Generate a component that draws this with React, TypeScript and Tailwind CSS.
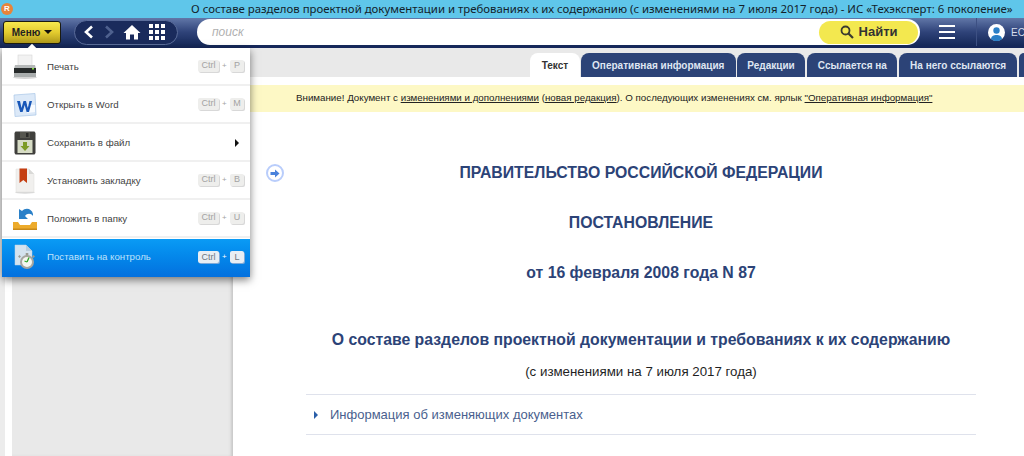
import React from "react";

const Printer = () => (
  <svg width="26" height="26" viewBox="0 0 26 26">
    <ellipse cx="13" cy="23.5" rx="12" ry="1.5" fill="#d5d5d5" />
    <rect x="6" y="1" width="14" height="11" fill="#f2f2f2" stroke="#cfcfcf" strokeWidth="0.5" />
    <path d="M3 11 L23 11 L24 15 L2 15 Z" fill="#b5b8b8" />
    <rect x="2" y="14" width="22" height="5" fill="#262a2a" />
    <rect x="2" y="19" width="22" height="4" fill="#a9adad" />
    <rect x="20" y="14" width="2" height="1.5" fill="#7fdc3c" />
  </svg>
);
const WordIcon = () => (
  <svg width="24" height="24" viewBox="0 0 24 24">
    <path d="M1 2 L22 0.5 L23 22 L2 23.5 Z" fill="#dce9f8" stroke="#a9c5e6" strokeWidth="0.7" />
    <path d="M14 12 L22 12 L22 19 L14 20 Z" fill="#f8fbff" />
    <path d="M4 8 L7 8 L8.5 15 L10.5 8 L13 8 L14.8 15 L16.5 8 L19 8 L16 19 L13.6 19 L11.7 12 L9.6 19 L7.2 19 Z" fill="#1857b8" />
  </svg>
);
const Floppy = () => (
  <svg width="22" height="24" viewBox="0 0 22 24">
    <path d="M1.5 0.5 L20.5 0.5 L21.5 2 L21.5 22 L20.5 23.5 L1.5 23.5 L0.5 22 L0.5 2 Z" fill="#3f3f3c" />
    <rect x="6" y="1" width="10" height="6" fill="#56564f" />
    <rect x="12" y="2" width="2.5" height="4" fill="#2a2a28" />
    <rect x="3.5" y="9" width="15" height="13" fill="#d7dcc5" />
    <path d="M9 11 L13 11 L13 15 L15.5 15 L11 20 L6.5 15 L9 15 Z" fill="#7d9b24" />
  </svg>
);
const Bookmark = () => (
  <svg width="22" height="26" viewBox="0 0 22 26">
    <ellipse cx="11" cy="24.5" rx="10" ry="1.2" fill="#d8d8d8" />
    <path d="M2 1 L15 1 L20 6 L20 24 L2 24 Z" fill="#f1f0ee" stroke="#dddcda" strokeWidth="0.5" />
    <path d="M15 1 L15 6 L20 6 Z" fill="#d9d9d7" />
    <path d="M5.5 0.5 L13 0.5 L13 15 L9.3 12 L5.5 15 Z" fill="#c53f12" />
  </svg>
);
const Folder = () => (
  <svg width="26" height="24" viewBox="0 0 26 24">
    <path d="M1 15 L6 15 L8 18 L18 18 L20 15 L25 15 L25 23 L1 23 Z" fill="#edab2b" />
    <rect x="1" y="21.5" width="24" height="1.5" fill="#c98a1a" />
    <path d="M21 7 C20 2 14 0 10 4 L7 2 L7 12 L16 12 L13 9 C15 6 19 6 21 9 Z" fill="#2a80c8" />
  </svg>
);
const Clock = () => (
  <svg width="26" height="26" viewBox="0 0 26 26">
    <path d="M3 1 L14 1 L20 7 L20 21 L3 21 Z" fill="#d4e3ef" stroke="#bcd2e4" strokeWidth="0.5" />
    <path d="M14 1 L14 7 L20 7 Z" fill="#b6cddf" />
    <circle cx="15" cy="18" r="7" fill="#a6a6a0" />
    <circle cx="15" cy="18" r="5" fill="#f4f6ef" />
    <rect x="13.7" y="9" width="2.6" height="2.4" fill="#9b9b92" />
    <rect x="20.5" y="11.5" width="2" height="2" fill="#9b9b92" transform="rotate(45 21.5 12.5)" />
    <rect x="6.5" y="11.5" width="2" height="2" fill="#9b9b92" transform="rotate(-45 7.5 12.5)" />
    <path d="M15 18 L17 13.5" stroke="#2fa52a" strokeWidth="1.3" />
    <path d="M15 18 L12.5 17" stroke="#2fa52a" strokeWidth="1.1" />
  </svg>
);

const Key = ({ k, wide, active }: { k: string; wide?: boolean; active?: boolean }) => (
  <span
    className={
      "flex h-[12px] items-center justify-center rounded-[2px] text-[9px] leading-none " +
      (wide ? "w-[21px] " : "w-[14px] ") +
      (active
        ? "bg-[#e8eef4] text-[#6d7780] shadow-[1px_1px_0_#7fa9d8]"
        : "bg-[#eeeeec] text-[#a3a3a3] shadow-[1px_1px_0_#d8d8d8]")
    }
  >
    {k}
  </span>
);

const Shortcut = ({ k, active }: { k: string; active?: boolean }) => (
  <div className={"flex items-center gap-[3px] " + (active ? "" : "mb-[3px]")}>
    <Key k="Ctrl" wide active={active} />
    <span className={"w-[5px] text-[8px] " + (active ? "text-white" : "text-[#a3a3a3]")}>+</span>
    <Key k={k} active={active} />
  </div>
);

const MenuRow = ({
  icon,
  label,
  k,
  arrow,
  active,
}: {
  icon: React.ReactNode;
  label: string;
  k?: string;
  arrow?: boolean;
  active?: boolean;
}) => (
  <div
    className={
      "flex h-[38px] items-center pr-[6px] " +
      (active
        ? "mt-[1px] bg-gradient-to-b from-[#0a9bf5] to-[#0470de] pb-[2px]"
        : "border-b-2 border-[#f0f0f0] bg-white pt-[2px]")
    }
  >
    <div className="flex w-[45px] shrink-0 items-center justify-center pl-[1px]">{icon}</div>
    <span className={"flex-1 text-[9.7px] " + (active ? "text-[#bfe3fb]" : "text-[#3f3f3f]")}>{label}</span>
    {k && <Shortcut k={k} active={active} />}
    {arrow && <span className="mr-[5px] h-0 w-0 border-y-[4px] border-l-[4px] border-y-transparent border-l-[#111]" />}
  </div>
);

const Tab = ({ label, active, width }: { label: string; active?: boolean; width: string }) => (
  <div
    className={
      "flex h-[24px] items-center justify-center rounded-t-[8px] text-[10px] font-bold " +
      width +
      (active ? " bg-white text-[#333]" : " bg-[#2c4377] text-[#dfe6f2]")
    }
  >
    {label}
  </div>
);

export default function App() {
  return (
    <div className="relative flex h-[456px] w-[1024px] flex-col overflow-hidden bg-white font-['Liberation_Sans',sans-serif]">
      {/* title bar */}
      <div className="flex h-[18px] shrink-0 items-center bg-[#5fc6ea] pl-[1px]">
        <div className="flex h-[12px] w-[12px] shrink-0 items-center justify-center rounded-full bg-[#e8843a] text-[8px] font-bold text-white">
          R
        </div>
        <span className="ml-[178px] shrink-0 whitespace-nowrap font-['Noto_Sans',sans-serif] text-[11.4px] text-[#13222b]">
          О составе разделов проектной документации и требованиях к их содержанию (с изменениями на 7 июля 2017 года) - ИС «Техэксперт: 6 поколение»
        </span>
      </div>

      {/* toolbar */}
      <div className="flex h-[30px] shrink-0 items-center border-b-2 border-[#16275a] bg-gradient-to-b from-[#6277a8] via-[#2f4379] to-[#152858] pl-[3px]">
        <div className="flex h-[23px] w-[58px] shrink-0 items-center justify-center gap-[4px] rounded-[3px] border border-[#1b1b10] bg-gradient-to-b from-[#f7e94e] via-[#e3cb2e] to-[#b09a1c] text-[10px] font-bold text-[#222]">
          <span>Меню</span>
          <span className="h-0 w-0 border-x-[4px] border-t-[4px] border-x-transparent border-t-[#111]" />
        </div>
        <div className="ml-[13px] flex h-[25px] w-[104px] shrink-0 items-center gap-[8px] rounded-full border border-[#5b6d9b] bg-[#1a2b5c] pl-[8px]">
          <svg width="12" height="14" viewBox="0 0 12 14">
            <path d="M9 1.5 L3 7 L9 12.5" fill="none" stroke="#fff" strokeWidth="2.6" />
          </svg>
          <svg width="12" height="14" viewBox="0 0 12 14">
            <path d="M3 1.5 L9 7 L3 12.5" fill="none" stroke="#4f618f" strokeWidth="2.6" />
          </svg>
          <svg width="18" height="16" viewBox="0 0 18 16">
            <path d="M9 1 L17.5 9 L15 9 L15 15.5 L11 15.5 L11 10.5 L7 10.5 L7 15.5 L3 15.5 L3 9 L0.5 9 Z" fill="#fff" />
          </svg>
          <div className="grid grid-cols-3 gap-[2px]">
            {Array.from({ length: 9 }).map((_, i) => (
              <span key={i} className="h-[4px] w-[4px] bg-white" />
            ))}
          </div>
        </div>
        <div className="ml-[19px] flex h-[26px] w-[723px] shrink-0 items-center rounded-full bg-white pl-[15px] text-[12px] italic text-[#b0b0b0]">
          поиск
          <div className="ml-auto mr-[2px] flex h-[23px] w-[99px] items-center justify-center gap-[5px] rounded-full bg-[#f3e84f] text-[13px] font-bold not-italic text-[#333]">
            <svg width="14" height="14" viewBox="0 0 14 14">
              <circle cx="5.5" cy="5.5" r="4" fill="none" stroke="#3a3a30" strokeWidth="1.8" />
              <path d="M8.5 8.5 L13 13" stroke="#3a3a30" strokeWidth="2.2" />
            </svg>
            Найти
          </div>
        </div>
        <div className="ml-[19px] flex w-[16px] shrink-0 flex-col gap-[4px]">
          <span className="h-[2px] bg-white" />
          <span className="h-[2px] bg-white" />
          <span className="h-[2px] bg-white" />
        </div>
        <div className="ml-[21px] h-full w-px shrink-0 bg-[#3d5083]" />
        <div className="ml-[11px] flex shrink-0 items-center gap-[6px]">
          <svg width="17" height="17" viewBox="0 0 17 17" className="shrink-0">
            <circle cx="8.5" cy="8.5" r="8.5" fill="#fff" />
            <circle cx="8.5" cy="6.5" r="3.2" fill="#2b80c7" />
            <path d="M3 15 C3 9.5 14 9.5 14 15 A8 8 0 0 1 3 15 Z" fill="#2b80c7" />
          </svg>
          <span className="text-[10px] text-[#d7deec]">ЕС</span>
        </div>
      </div>

      {/* body */}
      <div className="flex min-h-0 flex-1">
        {/* sidebar */}
        <div className="flex w-[233px] shrink-0">
          <div className="w-[5px] bg-[#ececec]" />
          <div className="w-[7px] bg-white" />
          <div className="flex-1 bg-[#e9e9e9] shadow-[inset_-3px_0_3px_-1px_#c8c8c8]" />
        </div>

        {/* main */}
        <div className="flex min-w-0 flex-1 flex-col">
          <div className="flex h-[29px] shrink-0 items-end bg-[#e9e9e9] pl-[297px]">
            <Tab label="Текст" active width="w-[50px]" />
            <div className="w-[1px]" />
            <Tab label="Оперативная информация" width="w-[155px]" />
            <div className="w-[1px]" />
            <Tab label="Редакции" width="w-[69px]" />
            <div className="w-[2px]" />
            <Tab label="Ссылается на" width="w-[90px]" />
            <div className="w-[2px]" />
            <Tab label="На него ссылаются" width="w-[118px]" />
            <div className="w-[2px]" />
            <div className="h-[24px] w-[5px] rounded-tl-[8px] bg-[#2c4377]" />
          </div>
          <div className="h-[8px] shrink-0" />
          <div className="flex h-[27px] shrink-0 items-center bg-[#fdf8c5] pl-[63px] text-[9.75px] text-[#222]">
            <span className="whitespace-nowrap">
              Внимание! Документ с <span className="underline">изменениями и дополнениями</span> (
              <span className="underline">новая редакция</span>). О последующих изменениях см. ярлык{" "}
              <span className="underline">"Оперативная информация"</span>
            </span>
          </div>

          <div className="relative flex flex-col items-center pl-[73px] pr-[48px] text-[#2c4377]">
            <div className="absolute left-[33px] top-[52px] flex h-[18px] w-[18px] items-center justify-center rounded-full border-2 border-[#b9cdfb] bg-white">
              <svg width="10" height="9" viewBox="0 0 10 9">
                <path d="M0.5 3 L5 3 L5 0.5 L9.5 4.5 L5 8.5 L5 6 L0.5 6 Z" fill="#4a82dc" />
              </svg>
            </div>
            <div className="mt-[52px] whitespace-nowrap text-[15.8px] font-bold leading-[18px]">ПРАВИТЕЛЬСТВО РОССИЙСКОЙ ФЕДЕРАЦИИ</div>
            <div className="mt-[32px] whitespace-nowrap text-[15.8px] font-bold leading-[18px]">ПОСТАНОВЛЕНИЕ</div>
            <div className="mt-[32px] whitespace-nowrap text-[15.8px] font-bold leading-[18px]">от 16 февраля 2008 года N 87</div>
            <div className="mt-[48px] whitespace-nowrap text-[15.8px] font-bold leading-[20px]">
              О составе разделов проектной документации и требованиях к их содержанию
            </div>
            <div className="mt-[13px] whitespace-nowrap text-[13.3px] leading-[18px] text-[#1f1f1f]">(с изменениями на 7 июля 2017 года)</div>
            <div className="mt-[13px] flex h-[41px] w-full items-center gap-[12px] border-y border-y-[#dfe2ec] pl-[8px] text-[13px] text-[#4a5f8e]">
              <span className="h-0 w-0 border-y-[4px] border-l-[4px] border-y-transparent border-l-[#2a5ea8]" />
              Информация об изменяющих документах
            </div>
          </div>
        </div>
      </div>

      {/* dropdown menu */}
      <div className="absolute left-[2px] top-[48px] w-[248px] bg-white shadow-[0_3px_8px_rgba(0,0,0,0.5)]">
        <span className="absolute left-[27px] top-[-3px] h-[6px] w-[6px] rotate-45 bg-white" />
        <MenuRow icon={<Printer />} label="Печать" k="P" />
        <MenuRow icon={<WordIcon />} label="Открыть в Word" k="M" />
        <MenuRow icon={<Floppy />} label="Сохранить в файл" arrow />
        <MenuRow icon={<Bookmark />} label="Установить закладку" k="B" />
        <MenuRow icon={<Folder />} label="Положить в папку" k="U" />
        <MenuRow icon={<Clock />} label="Поставить на контроль" k="L" active />
      </div>
    </div>
  );
}
